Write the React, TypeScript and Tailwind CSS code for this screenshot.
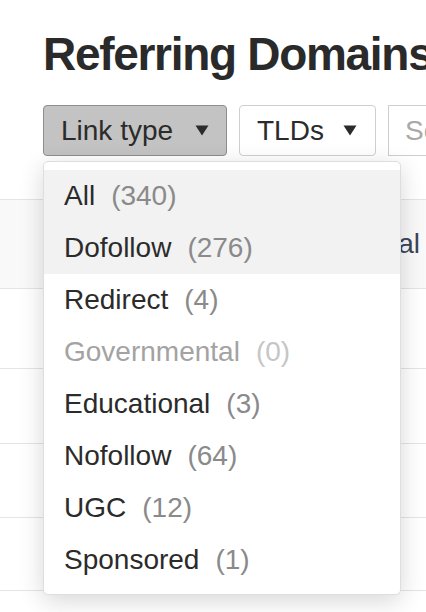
import React from "react";

const Caret = () => (
  <svg width="14" height="11" viewBox="0 0 14 11" className="shrink-0">
    <path d="M0.5 0.5 L13.5 0.5 L7 10.5 Z" fill="#2b2b2b" />
  </svg>
);

const items: { label: string; count: number; disabled?: boolean; active?: boolean }[] = [
  { label: "All", count: 340, active: true },
  { label: "Dofollow", count: 276, active: true },
  { label: "Redirect", count: 4 },
  { label: "Governmental", count: 0, disabled: true },
  { label: "Educational", count: 3 },
  { label: "Nofollow", count: 64 },
  { label: "UGC", count: 12 },
  { label: "Sponsored", count: 1 },
];

export default function App() {
  return (
    <div
      className="relative w-[426px] h-[612px] overflow-hidden bg-white text-[#2d2d2d]"
      style={{ fontFamily: '"Liberation Sans", Arial, sans-serif' }}
    >
      <div className="pl-[43px] pt-[31px]">
        <h1 className="text-[46px] leading-[46px] font-bold whitespace-nowrap text-[#2a2a2a] tracking-[-1.3px]">
          Referring Domains
        </h1>
        <div className="mt-[28px] flex items-center gap-[12px] whitespace-nowrap overflow-hidden">
          <button className="shrink-0 h-[51px] w-[184px] flex items-center justify-between pl-[17px] pr-[17px] bg-[#c3c3c3] border border-[#8e8e8e] rounded-[4px] text-[28px] text-[#2b2b2b]">
            <span>Link type</span>
            <Caret />
          </button>
          <button className="shrink-0 h-[51px] w-[137px] flex items-center justify-between pl-[17px] pr-[18px] bg-white border border-[#cfcfcf] rounded-[4px] text-[28px] text-[#2b2b2b]">
            <span>TLDs</span>
            <Caret />
          </button>
          <div className="shrink-0 h-[51px] w-[200px] flex items-center pl-[16px] bg-white border border-[#cfcfcf] text-[28px] text-[#a8a8a8]">
            Search
          </div>
        </div>
      </div>

      <div className="mt-[43px] w-full">
        <div className="h-[90px] border-t border-b border-[#e4e4e4] bg-[#f9f9f9] flex items-center justify-end pr-[6px]">
          <span className="text-[28px] text-[#3a4658]">Total</span>
        </div>
        <div className="h-[80px] border-b border-[#e4e4e4]" />
        <div className="h-[75px] border-b border-[#e4e4e4]" />
        <div className="h-[74px] border-b border-[#e4e4e4]" />
        <div className="h-[73px] border-b border-[#e4e4e4]" />
      </div>

      <div className="absolute left-[43px] top-[161px] w-[358px] bg-white border border-[#dedede] rounded-[5px] py-[8px] shadow-[0_6px_24px_rgba(0,0,0,0.16)]">
        {items.map((it) => (
          <div
            key={it.label}
            className={`h-[52px] flex items-center pl-[20px] text-[28px] whitespace-nowrap ${
              it.active ? "bg-[#f2f2f2]" : "bg-white"
            }`}
          >
            <span className={it.disabled ? "text-[#a3a3a3]" : "text-[#2b2b2b]"}>{it.label}</span>
            <span className={`ml-[16px] ${it.disabled ? "text-[#c6c6c6]" : "text-[#8a8a8a]"}`}>
              ({it.count})
            </span>
          </div>
        ))}
      </div>
    </div>
  );
}
